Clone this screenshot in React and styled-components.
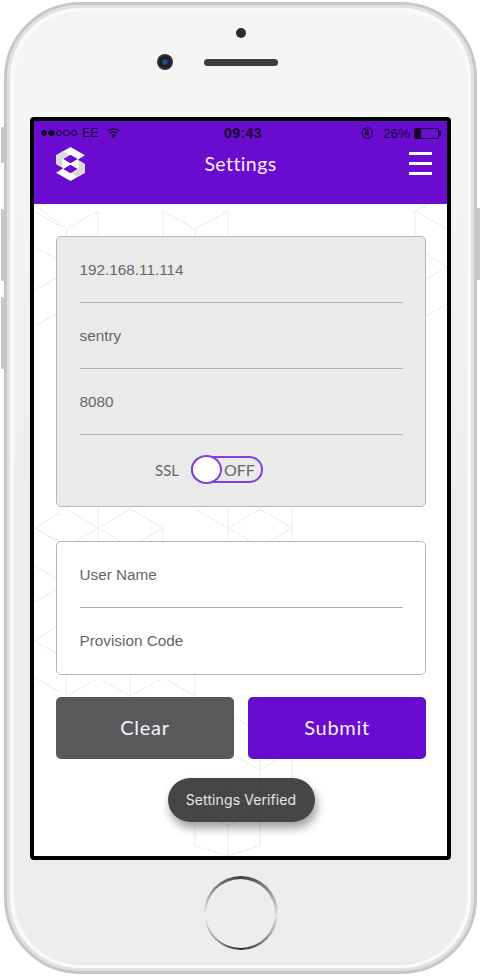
import React from "react";
import styled, { createGlobalStyle } from "styled-components";

const PURPLE = "#6a0bd0";
const GEOMETRIC = `Lato, "Open Sans", sans-serif`;
const HELVETICA = `"Liberation Sans", Arial, sans-serif`;

const GlobalStyle = createGlobalStyle`
  html, body {
    margin: 0;
    padding: 0;
    background: #fff;
  }
`;

const Stage = styled.div`
  width: 481px;
  height: 976px;
  box-sizing: border-box;
  padding: 2px 4px;
`;

const Phone = styled.div`
  position: relative;
  width: 473px;
  height: 972px;
  box-sizing: border-box;
  display: flex;
  flex-direction: column;
  align-items: center;
  border: 3px solid #c6c7c7;
  border-radius: 76px;
  background: linear-gradient(#f5f5f5 0, #f5f5f5 12%, #ecedec 50%, #ecedec 100%);
  box-shadow: inset 0 0 0 3px #e0e1e1, inset 0 0 2px 7px #fafafa, inset 0 -6px 2px 1px #c4c5c5;
`;

const SideButton = styled.span`
  position: absolute;
  top: ${props => props.top}px;
  ${props => (props.right ? "right: -6px;" : "left: -6px;")}
  width: 3px;
  height: ${props => props.length}px;
  background: #c6c7c7;
  border-radius: 1px;
`;

const TopBezel = styled.div`
  height: 112px;
  width: 100%;
  box-sizing: border-box;
  padding-top: 23px;
  display: flex;
  flex-direction: column;
  align-items: center;
`;

const Sensor = styled.span`
  width: 10px;
  height: 10px;
  border-radius: 50%;
  background: #2c2c2e;
`;

const SensorRow = styled.div`
  margin-top: 16px;
  width: 100%;
  display: grid;
  grid-template-columns: 1fr 74px 1fr;
  align-items: center;
`;

const Camera = styled.span`
  justify-self: end;
  margin-right: 31px;
  width: 16px;
  height: 16px;
  border-radius: 50%;
  background: radial-gradient(circle, #1f4b8e 0 2px, #15171d 4px, #3a3b3e 8px);
`;

const Speaker = styled.span`
  height: 7px;
  border-radius: 4px;
  background: #3d3d3f;
`;

const Screen = styled.div`
  width: 421px;
  height: 743px;
  box-sizing: border-box;
  flex: none;
  border: 4px solid #000;
  border-radius: 4px;
  background: #fff;
  display: flex;
  flex-direction: column;
`;

const Header = styled.header`
  height: 83px;
  flex: none;
  background: ${PURPLE};
  color: #fff;
  display: flex;
  flex-direction: column;
`;

const StatusBar = styled.div`
  height: 22px;
  padding: 1px 5px 0 7px;
  display: grid;
  grid-template-columns: 1fr auto 1fr;
  align-items: center;
  font-family: ${HELVETICA};
  font-size: 13.5px;
  color: #16052c;
`;

const StatusGroup = styled.div`
  display: flex;
  align-items: center;
  justify-content: ${props => (props.end ? "flex-end" : "flex-start")};
  gap: ${props => props.gap || 0}px;
`;

const Dot = styled.span`
  width: 6.4px;
  height: 6.4px;
  margin-right: 1px;
  border-radius: 50%;
  box-sizing: border-box;
  border: 1px solid #16052c;
  background: ${props => (props.on ? "#16052c" : "transparent")};
`;

const Carrier = styled.span`
  margin: 0 8px 0 4px;
  font-size: 12.5px;
`;

const Percent = styled.span`
  margin-left: 4px;
`;

const Clock = styled.span`
  margin-left: 3px;
  font-weight: 700;
  font-size: 14px;
  letter-spacing: 0.4px;
`;

const Battery = styled.span`
  position: relative;
  width: 25px;
  height: 11px;
  box-sizing: border-box;
  border: 1px solid #16052c;
  border-radius: 2px;
  margin-right: 3px;
  &::before {
    content: "";
    display: block;
    width: 6px;
    height: 100%;
    background: #16052c;
  }
  &::after {
    content: "";
    position: absolute;
    right: -3px;
    top: 2px;
    width: 2px;
    height: 5px;
    background: #16052c;
    border-radius: 0 1px 1px 0;
  }
`;

const NavBar = styled.div`
  height: 40px;
  padding: 0 15px 0 22px;
  display: grid;
  grid-template-columns: 1fr auto 1fr;
  align-items: center;
`;

const Title = styled.h1`
  margin: -2px 7px 0 0;
  font-family: ${GEOMETRIC};
  font-size: 19.5px;
  font-weight: 400;
  letter-spacing: 0.4px;
  color: #f4eefc;
`;

const MenuButton = styled.div`
  justify-self: end;
  width: 23px;
  margin-top: -2px;
  display: flex;
  flex-direction: column;
  gap: 7px;
  span {
    height: 3px;
    background: #fff;
  }
`;

const Main = styled.main`
  position: relative;
  flex: 1;
  min-height: 0;
  padding: 32px 21px 0 22px;
  display: flex;
  flex-direction: column;
  align-items: stretch;
`;

const Backdrop = styled.svg`
  position: absolute;
  left: 0;
  top: 0;
  width: 100%;
  height: 100%;
  fill: none;
  stroke: #ebebeb;
  stroke-width: 1;
`;

const Card = styled.section`
  position: relative;
  box-sizing: border-box;
  height: ${props => props.height}px;
  margin-bottom: ${props => props.gap}px;
  padding: 0 22px 0 22.5px;
  border: 1.5px solid #b6b6b6;
  border-radius: 5px;
  background: ${props => (props.muted ? "#eaeaea" : "#fff")};
`;

const Field = styled.div`
  height: 66px;
  box-sizing: border-box;
  padding-top: 23px;
  font-family: ${HELVETICA};
  font-size: 15.3px;
  line-height: 19px;
  color: #666;
  border-bottom: ${props => (props.plain ? "none" : "1px solid #b0b0b0")};
`;

const SslRow = styled.div`
  margin-top: 21px;
  padding-left: 75.5px;
  display: flex;
  align-items: center;
  gap: 12px;
  font-family: ${GEOMETRIC};
  font-size: 15px;
  color: #666;
`;

const Toggle = styled.div`
  position: relative;
  width: 72px;
  height: 27px;
  box-sizing: border-box;
  padding-left: 31px;
  display: flex;
  align-items: center;
  border: 2px solid #8240da;
  border-radius: 14px;
  font-size: 16px;
  color: #666;
`;

const Knob = styled.span`
  position: absolute;
  left: -2px;
  top: -3px;
  width: 31px;
  height: 29px;
  box-sizing: border-box;
  border: 2px solid #8240da;
  border-radius: 50%;
  background: #fff;
`;

const ButtonRow = styled.div`
  position: relative;
  display: grid;
  grid-template-columns: 178px 178px;
  justify-content: space-between;
`;

const Button = styled.button`
  height: 62px;
  padding: 0 0 2px;
  border: none;
  border-radius: 5px;
  background: ${props => (props.primary ? PURPLE : "#58595b")};
  color: #f6f2fb;
  font-family: ${GEOMETRIC};
  font-size: 20px;
  letter-spacing: 0.7px;
`;

const Toast = styled.div`
  position: relative;
  align-self: center;
  margin-top: 19px;
  width: 147px;
  height: 44px;
  padding-bottom: 2px;
  box-sizing: border-box;
  display: flex;
  align-items: center;
  justify-content: center;
  border-radius: 22px;
  background: rgba(50, 50, 50, 0.9);
  box-shadow: 2px 6px 10px rgba(0, 0, 0, 0.38);
  color: #e6e6e6;
  font-family: "Inter", ${HELVETICA};
  font-size: 14px;
  letter-spacing: 0.1px;
`;

const BottomBezel = styled.div`
  flex: 1;
  width: 100%;
  display: flex;
  justify-content: center;
  padding-top: 16px;
`;

const HomeButton = styled.div`
  width: 74px;
  height: 74px;
  box-sizing: border-box;
  padding: 2.5px;
  border-radius: 50%;
  background: conic-gradient(
    #3c3c3c 0deg,
    #8d8d8d 50deg,
    #e6e6e6 95deg,
    #8f8f8f 135deg,
    #2d2d2d 180deg,
    #9d9d9d 225deg,
    #f2f2f2 265deg,
    #8a8a8a 310deg,
    #3c3c3c 360deg
  );
  span {
    display: block;
    width: 100%;
    height: 100%;
    border-radius: 50%;
    background: #ecedec;
  }
`;

// page coordinates, the viewBox below maps them onto the screen area
const CUBE_LINES = [
  "35,205 66.5,229 98,211 98,236",
  "66.5,229 66.5,236",
  "163,236 163,211 195,229 228,211 228,236",
  "195,229 195,236",
  "447,229 415,211 415,236",
  "415,211 430,204",
  "35,212 60,226",
  "35,247 60,261",
  "35,290 60,276",
  "35,326 60,312",
  "426,253 447,267 426,279",
  "426,316 447,304",
  "35,528 60,513",
  "35,528 98,565",
  "66,509 98,528 131,509 163,528 131,547 98,528 66,547 35,528",
  "98,507 98,541",
  "163,528 163,541",
  "195,509 228,528 260,509 292,528 260,547 228,528",
  "228,507 228,541",
  "292,507 292,541",
  "228,547 242,541",
  "35,566 56,578",
  "35,602 56,590",
  "35,641 56,627",
  "35,641 56,653",
  "35,678 60,692",
  "66,675 66,697",
  "66,697 95,680",
  "102,680 130,696 160,680",
  "130,675 130,697",
  "167,680 195,696",
  "195,675 195,697",
  "234,717 260,733",
  "234,755 260,770 292,751",
  "292,755 292,785",
  "260,759 260,846",
  "195,809 228,790 260,809 228,826 195,809",
  "195,809 195,846 228,856 260,846",
  "228,826 228,856",
];

const Logo = () => (
  <svg width="29" height="34" viewBox="0 0 28 33">
    <path
      fill="#fff"
      d="M14 0 28 8 21 12.3 28 16.5V25L14 33 0 25 7 20.7 0 16.5V8Z"
    />
    <path fill="#d9d9d9" d="M0 8 7 4 13 7.5 6 11.7V20L0 16.5Z" />
    <path fill="#d9d9d9" d="M28 16.5V25L21 29 15 25.5 22 21.3V13Z" />
    <path fill={PURPLE} d="M14 7.5 21 11.6 14 15.7 7 11.6Z" />
    <path fill={PURPLE} d="M14 17.3 21 21.4 14 25.5 7 21.4Z" />
  </svg>
);

const WifiIcon = () => (
  <svg width="13" height="10" viewBox="0 0 13 10" fill="none" stroke="#16052c" strokeWidth="1.4">
    <path d="M.8 3.3a8 8 0 0 1 11.4 0" />
    <path d="M2.8 5.4a5.2 5.2 0 0 1 7.4 0" />
    <path d="M4.8 7.4a2.4 2.4 0 0 1 3.4 0" />
    <circle cx="6.5" cy="9" r=".5" fill="#16052c" />
  </svg>
);

const RotationLockIcon = () => (
  <svg width="14" height="12" viewBox="0 0 14 12" fill="none" stroke="#16052c" strokeWidth="1">
    <path d="M11 8.6A5.3 5.3 0 1 1 11 3.4V6" />
    <path fill="#16052c" stroke="none" d="M9.6 5.4h3.2L11.2 7.4Z" />
    <rect x="3.8" y="5.2" width="4" height="3" fill="#16052c" stroke="none" />
    <path d="M4.6 5.2V4.2a1.2 1.2 0 0 1 2.4 0v1" />
  </svg>
);

export default function App() {
  return (
    <Stage>
      <GlobalStyle />
      <Phone>
        <SideButton top={122} length={36} />
        <SideButton top={204} length={72} />
        <SideButton top={292} length={72} />
        <SideButton right top={203} length={72} />
        <TopBezel>
          <Sensor />
          <SensorRow>
            <Camera />
            <Speaker />
          </SensorRow>
        </TopBezel>
        <Screen>
          <Header>
            <StatusBar>
              <StatusGroup>
                <Dot on />
                <Dot on />
                <Dot />
                <Dot />
                <Dot />
                <Carrier>EE</Carrier>
                <WifiIcon />
              </StatusGroup>
              <Clock>09:43</Clock>
              <StatusGroup end gap={4}>
                <RotationLockIcon />
                <Percent>26%</Percent>
                <Battery />
              </StatusGroup>
            </StatusBar>
            <NavBar>
              <Logo />
              <Title>Settings</Title>
              <MenuButton>
                <span />
                <span />
                <span />
              </MenuButton>
            </NavBar>
          </Header>
          <Main>
            <Backdrop viewBox="34 204 413 652">
              {CUBE_LINES.map(points => (
                <polyline key={points} points={points} />
              ))}
            </Backdrop>
            <Card muted height={271} gap={34}>
              <Field>192.168.11.114</Field>
              <Field>sentry</Field>
              <Field>8080</Field>
              <SslRow>
                SSL
                <Toggle>
                  <Knob />
                  OFF
                </Toggle>
              </SslRow>
            </Card>
            <Card height={134} gap={22}>
              <Field>User Name</Field>
              <Field plain>Provision Code</Field>
            </Card>
            <ButtonRow>
              <Button>Clear</Button>
              <Button primary>Submit</Button>
            </ButtonRow>
            <Toast>Settings Verified</Toast>
          </Main>
        </Screen>
        <BottomBezel>
          <HomeButton>
            <span />
          </HomeButton>
        </BottomBezel>
      </Phone>
    </Stage>
  );
}
